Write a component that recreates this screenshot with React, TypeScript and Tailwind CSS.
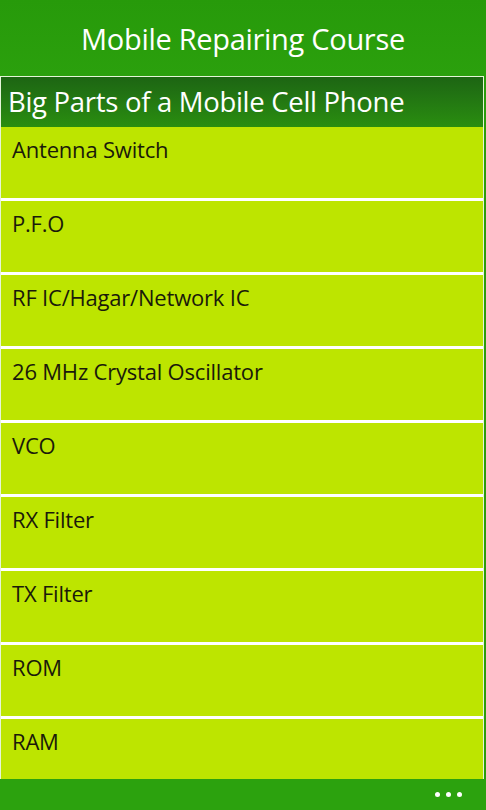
import React from 'react';

const parts = [
  'Antenna Switch',
  'P.F.O',
  'RF IC/Hagar/Network IC',
  '26 MHz Crystal Oscillator',
  'VCO',
  'RX Filter',
  'TX Filter',
  'ROM',
  'RAM',
];

const App: React.FC = () => {
  return (
    <div
      className="relative h-[810px] w-[486px] overflow-hidden bg-[#2b9c0b]"
      style={{ fontFamily: '"Open Sans", "Noto Sans", sans-serif' }}
    >
      <header className="flex h-[76px] items-center justify-center bg-gradient-to-b from-[#279a0a] to-[#2ba00d]">
        <h1 className="text-[29px] leading-none text-white tracking-[-0.3px]">Mobile Repairing Course</h1>
      </header>

      <div className="mr-[2px] border-l border-t border-r border-[#e6f5d8] bg-white">
        <div className="flex h-[50px] items-center bg-gradient-to-b from-[#1d6513] to-[#2a8e0f] pl-[7px]">
          <h2 className="text-[27.5px] leading-none text-white tracking-[-0.3px]">Big Parts of a Mobile Cell Phone</h2>
        </div>
        <ul className="flex flex-col gap-[3px]">
          {parts.map((p) => (
            <li key={p} className="h-[71px] bg-[#bde500] pl-[11px] pt-[11px]">
              <span className="text-[22px] leading-none text-[#1a1a0a] tracking-[-0.2px]">{p}</span>
            </li>
          ))}
        </ul>
      </div>

      <div className="absolute bottom-0 left-0 right-0 flex h-[31px] items-center justify-end bg-[#2ca20e] pr-[24px]">
        <div className="flex gap-[6px]">
          <span className="h-[5px] w-[5px] rounded-full bg-white" />
          <span className="h-[5px] w-[5px] rounded-full bg-white" />
          <span className="h-[5px] w-[5px] rounded-full bg-white" />
        </div>
      </div>
    </div>
  );
};

export default App;
